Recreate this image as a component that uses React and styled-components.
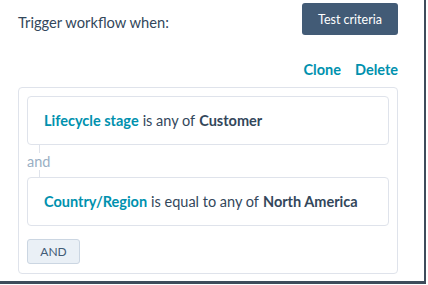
import React from "react";
import styled, { createGlobalStyle } from "styled-components";

const GlobalStyle = createGlobalStyle`
  html, body {
    margin: 0;
    padding: 0;
    background: #ffffff;
  }
  body {
    font-family: Lato, "Open Sans", sans-serif;
    color: #33475b;
  }
`;

const Frame = styled.div`
  width: 426px;
  height: 284px;
  box-sizing: border-box;
  border-right: 2px solid #3e4c5b;
  border-bottom: 3px solid #3e4c5b;
  background: #ffffff;
  padding: 3px 26px 0 18px;
`;

const Header = styled.div`
  display: flex;
  justify-content: space-between;
  align-items: flex-start;
  height: 32px;
`;

const Heading = styled.div`
  font-size: 14.7px;
  color: #33475b;
  padding-top: 10px;
`;

const Button = styled.button`
  font-family: inherit;
  height: 32px;
  width: 96px;
  border: none;
  border-radius: 3px;
  background: #425b76;
  color: #ffffff;
  font-size: 12.5px;
  padding: 0;
`;

const Actions = styled.div`
  display: flex;
  justify-content: flex-end;
  gap: 14px;
  margin-top: 26px;
  height: 18px;
  line-height: 18px;
`;

const Link = styled.span`
  color: #0091ae;
  font-size: 14.5px;
  font-weight: 700;
`;

const Group = styled.div`
  margin-top: 8px;
  border: 1px solid #dfe3eb;
  border-radius: 4px;
  padding: 8px;
  height: 187px;
  box-sizing: border-box;
`;

const Card = styled.div`
  border: 1px solid #dfe3eb;
  border-radius: 4px;
  height: 49px;
  box-sizing: border-box;
  display: flex;
  align-items: center;
  padding-left: 16px;
  font-size: 14.5px;
  color: #33475b;
`;

const Prop = styled.span`
  color: #0091ae;
  font-weight: 700;
  margin-right: 4px;
`;

const Value = styled.strong`
  font-weight: 700;
  margin-left: 4px;
`;

const Joiner = styled.div`
  position: relative;
  height: 32px;
  display: flex;
  align-items: center;
  font-size: 14.5px;
  color: #99afc4;
  &::before {
    content: "";
    position: absolute;
    left: 12px;
    top: 0;
    bottom: 0;
    border-left: 1px solid #dfe3eb;
  }
`;

const JoinText = styled.span`
  position: relative;
  background: #ffffff;
`;

const AndButton = styled.button`
  font-family: inherit;
  margin-top: 13px;
  width: 53px;
  height: 25px;
  border: 1px solid #cbd6e2;
  border-radius: 3px;
  background: #eaf0f6;
  color: #425b76;
  font-size: 12px;
  padding: 0;
`;

export default function App() {
  return (
    <>
      <GlobalStyle />
      <Frame>
        <Header>
          <Heading>Trigger workflow when:</Heading>
          <Button>Test criteria</Button>
        </Header>
        <Actions>
          <Link>Clone</Link>
          <Link>Delete</Link>
        </Actions>
        <Group>
          <Card>
            <Prop>Lifecycle stage</Prop> is any of <Value>Customer</Value>
          </Card>
          <Joiner>
            <JoinText>and</JoinText>
          </Joiner>
          <Card>
            <Prop>Country/Region</Prop> is equal to any of <Value>North America</Value>
          </Card>
          <AndButton>AND</AndButton>
        </Group>
      </Frame>
    </>
  );
}
